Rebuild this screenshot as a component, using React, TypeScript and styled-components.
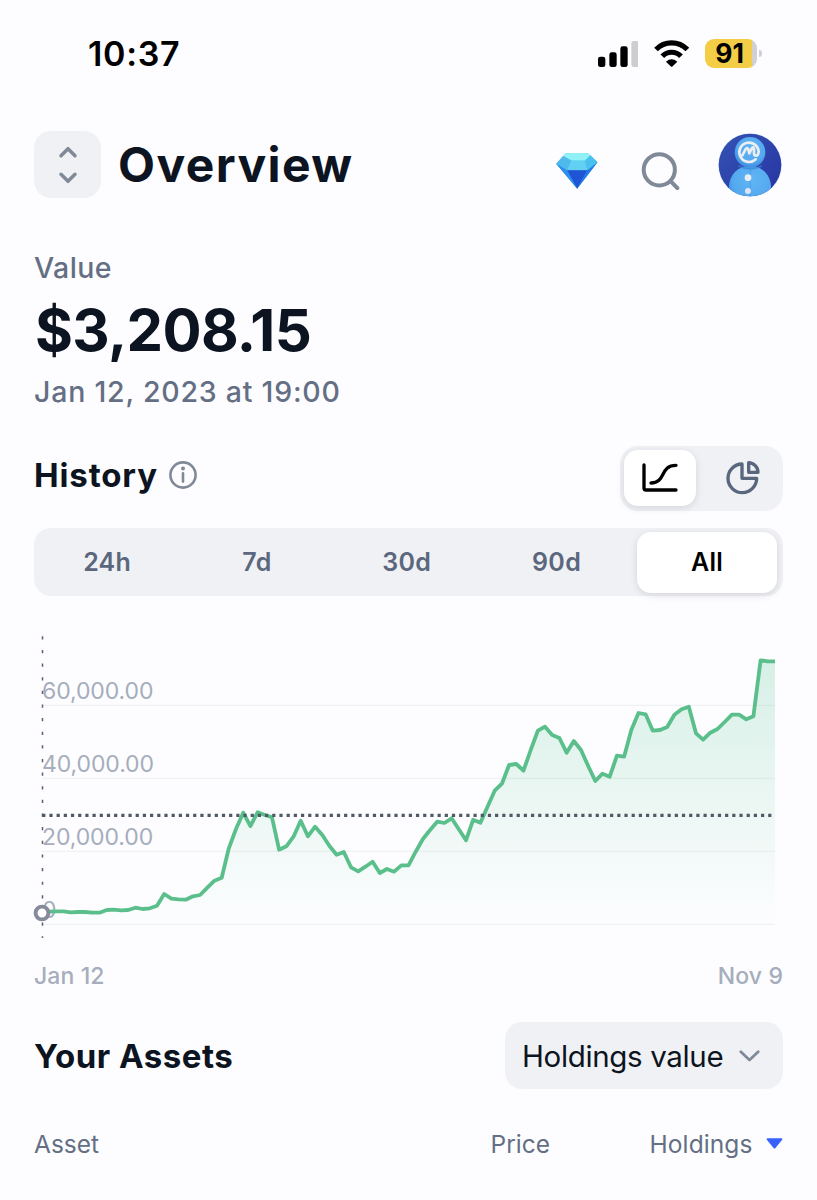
import React from "react";
import styled, { createGlobalStyle } from "styled-components";

const GlobalStyle = createGlobalStyle`
  * { box-sizing: border-box; }
  body { margin: 0; background: #fdfdff; }
`;

const ink = "#0d1421";
const slate = "#646f84";
const muted = "#808998";
const pale = "#a6adbc";
const panel = "#f0f1f5";

const Screen = styled.main`
  width: 817px;
  height: 1200px;
  overflow: hidden;
  background: #fdfdff;
  color: ${ink};
  font-family: Inter, "Liberation Sans", sans-serif;
`;

const Label = styled.span<{ $size: number; $weight?: number; $track?: number; $color?: string }>`
  font-size: ${(p) => p.$size}px;
  font-weight: ${(p) => p.$weight ?? 400};
  letter-spacing: ${(p) => p.$track ?? 0}px;
  color: ${(p) => p.$color ?? ink};
  white-space: nowrap;
`;

const StatusBar = styled.div`
  height: 107px;
  padding: 0 55.5px 0 88px;
  display: flex;
  align-items: center;
  justify-content: space-between;
`;

const StatusIcons = styled.div`
  display: flex;
  align-items: center;
  gap: 15.5px;
`;

const BatteryWrap = styled.div`
  display: flex;
  align-items: center;
  gap: 2px;
`;

const Battery = styled.div`
  width: 52.5px;
  height: 29px;
  padding-right: 2.5px;
  border-radius: 9px;
  background: linear-gradient(90deg, #f3cd46 0 47.5px, #cfcfd4 47.5px);
  display: flex;
  align-items: center;
  justify-content: center;
  line-height: 29px;
`;

const BatteryTip = styled.div`
  width: 2.5px;
  height: 7px;
  border-radius: 0 3px 3px 0;
  background: #cdd0d5;
`;

const Content = styled.div`
  padding: 24px 34px 0;
`;

const Header = styled.header`
  height: 67px;
  display: flex;
  align-items: center;
`;

const SwitchButton = styled.button`
  width: 67px;
  height: 67px;
  margin: 0 17px 0 0;
  padding: 0;
  border: 0;
  border-radius: 17px;
  background: ${panel};
  display: grid;
  place-items: center;
`;

const Title = styled.h1`
  margin: 0 auto 0 0;
  font-size: 48px;
  line-height: 60px;
  font-weight: 700;
  letter-spacing: 1.4px;
`;

const HeaderActions = styled.div`
  display: flex;
  align-items: center;
  margin-right: 1px;
  svg { display: block; }
`;

const GemSlot = styled.div`margin: 13px 42.5px 0 0;`;
const SearchSlot = styled.div`margin: 14px 38.5px 0 0;`;

const Summary = styled.section`
  margin-top: 52px;
  height: 159px;
  display: flex;
  flex-direction: column;
`;

const Caption = styled(Label)`line-height: 36px;`;

const Amount = styled(Label)`
  line-height: 76px;
  margin: 6px 0 6px 1px;
`;

const HistoryRow = styled.div`
  margin-top: 37px;
  height: 65px;
  display: flex;
  justify-content: space-between;
`;

const HistoryTitle = styled.h2`
  margin: 0;
  height: 58px;
  display: flex;
  align-items: center;
  gap: 11.5px;
`;

const ViewToggle = styled.div`
  width: 163px;
  height: 64.5px;
  padding: 3.5px 4px;
  border-radius: 18px;
  background: ${panel};
  display: flex;
`;

const ViewOption = styled.button<{ $active?: boolean }>`
  flex: ${(p) => (p.$active ? "0 0 71.5px" : "1")};
  height: 56.5px;
  padding: ${(p) => (p.$active ? "0" : "0 0 0 12px")};
  border: 0;
  border-radius: 14px;
  background: ${(p) => (p.$active ? "#fff" : "transparent")};
  box-shadow: ${(p) => (p.$active ? "0 2px 7px rgba(60, 66, 80, 0.16)" : "none")};
  display: grid;
  place-items: center;
`;

const Tabs = styled.div`
  margin-top: 17px;
  height: 68px;
  border-radius: 17px;
  background: ${panel};
  display: grid;
  grid-template-columns: repeat(5, 1fr);
`;

const Tab = styled.button<{ $active?: boolean }>`
  margin: 4px 6px 4px 4px;
  padding: ${(p) => (p.$active ? "0" : "0 1.5px 0 0")};
  border: 0;
  border-radius: 14px;
  font: 600 25px/61px Inter, sans-serif;
  letter-spacing: 0.3px;
  color: ${(p) => (p.$active ? "#000" : "#5b677d")};
  background: ${(p) => (p.$active ? "#fff" : "transparent")};
  box-shadow: ${(p) => (p.$active ? "0 2px 7px rgba(60, 66, 80, 0.16)" : "none")};
`;

const ChartBox = styled.div`
  margin-top: 24px;
  height: 330px;
  svg { display: block; overflow: visible; }
`;

const DateRange = styled.div`
  margin-top: 10px;
  height: 32px;
  display: flex;
  justify-content: space-between;
  align-items: center;
`;

const AssetsRow = styled.div`
  margin-top: 30px;
  height: 67px;
  display: flex;
  align-items: center;
  justify-content: space-between;
`;

const SortSelect = styled.button`
  width: 278px;
  height: 67px;
  padding: 0 23px 0 17px;
  border: 0;
  border-radius: 17px;
  background: ${panel};
  font-family: inherit;
  display: flex;
  align-items: center;
  justify-content: space-between;
`;

const TableHead = styled.div`
  margin-top: 37px;
  height: 36px;
  display: grid;
  grid-template-columns: 1fr 120px 233px;
  align-items: center;
`;

const HeadCell = styled.div<{ $end?: boolean }>`
  display: flex;
  align-items: center;
  gap: 13.5px;
  justify-content: ${(p) => (p.$end ? "flex-end" : "flex-start")};
  svg { margin-top: -2px; }
`;

const Signal = () => (
  <svg width="40.7" height="26" viewBox="53 61 122 78">
    <rect x="53" y="108" width="22" height="31" rx="7" />
    <rect x="87" y="95" width="22" height="44" rx="7" />
    <rect x="120" y="77" width="22" height="62" rx="7" />
    <rect x="153" y="61" width="22" height="78" rx="7" fill="#cdcdd0" />
  </svg>
);

const Wifi = () => (
  <svg width="35.3" height="27" viewBox="221 58 106 81">
    <g fill="none" stroke="#000" strokeWidth="15.500">
      <path d="M227 86.500A65 65 0 0 1 321 86.500" />
      <path d="M246 107A38 38 0 0 1 302 107" />
    </g>
    <path d="M257 123Q274 108 291 123L277 137Q274 140 271 137Z" />
  </svg>
);

const Sorter = () => (
  <svg width="20" height="38" viewBox="0 0 20 38" fill="none" stroke={muted} strokeWidth="3.500" strokeLinecap="round" strokeLinejoin="round">
    <path d="M3 9.700L10 2.700L17 9.700M3 28.300L10 35.300L17 28.300" />
  </svg>
);

const Gem = () => (
  <svg width="42" height="36" viewBox="47 100 125 108">
    <path d="M76 101Q110 98 142 101L171 128L110 207L47 132Z" fill="#3fb2ee" />
    <path d="M76 101Q110 98 142 101L150 107L136 124L90 124L68 109Z" fill="#8ff1f5" />
    <path d="M68 109L92 122L80 152L47 132Z" fill="#4fb9ec" />
    <path d="M92 122L134 122L141 152L80 152Z" fill="#62d0f3" />
    <path d="M150 107L171 128L141 152L134 122Z" fill="#48c1ee" />
    <path d="M47 132L80 152L110 207Z" fill="#2e8eee" />
    <path d="M80 152H141L110 207Z" fill="#1d55d4" />
    <path d="M171 128L141 152L110 207Z" fill="#2479e6" />
  </svg>
);

const Search = () => (
  <svg width="39" height="39" viewBox="0 0 39 39" fill="none" stroke={muted} strokeWidth="4" strokeLinecap="round">
    <circle cx="18.300" cy="17.800" r="15.600" />
    <path d="M29.500 29.200L36.300 36" />
  </svg>
);

const Avatar = () => (
  <svg width="64" height="64" viewBox="534 38 192 192">
    <defs>
      <clipPath id="face"><circle cx="630" cy="134" r="94" /></clipPath>
      <linearGradient id="night" x1="0" y1="0" x2="1" y2="1">
        <stop offset="0" stopColor="#3453b6" />
        <stop offset="1" stopColor="#2734a0" />
      </linearGradient>
      <radialGradient id="snow" cx=".55" cy=".35" r=".65">
        <stop offset="0" stopColor="#5fb6f5" />
        <stop offset=".7" stopColor="#55a9ef" />
        <stop offset="1" stopColor="#3f8be0" />
      </radialGradient>
    </defs>
    <circle cx="630" cy="134" r="95.500" fill="#dceafc" />
    <g clipPath="url(#face)">
      <rect x="534" y="38" width="192" height="192" fill="url(#night)" />
      <circle cx="630" cy="199" r="63" fill="url(#snow)" />
      <circle cx="630" cy="96" r="46" fill="url(#snow)" />
      <path d="M595 137Q630 154 665 137" fill="none" stroke="#3783d8" strokeWidth="5" opacity=".7" />
      <path d="M631 145V230" stroke="#438fde" strokeWidth="2" />
      <g fill="none" stroke="#eceef2" strokeWidth="8" strokeLinecap="round" strokeLinejoin="round">
        <path d="M647 117A29 29 0 1 1 656 94Q655 106 648 106Q642 106 642 98V84Q640 78 635 85L628 99L625 87Q621 79 616 88L607 105" />
      </g>
      <circle cx="624" cy="172" r="10" fill="#e8edf5" />
      <circle cx="624" cy="212" r="9" fill="#dce5f1" />
    </g>
  </svg>
);

const Info = () => (
  <svg width="28" height="28" viewBox="0 0 28 28" fill="none" stroke={muted} strokeWidth="2.600">
    <circle cx="14" cy="14" r="12.600" />
    <path d="M14 12.400V20.600" strokeLinecap="round" />
    <circle cx="14" cy="7.500" r="2" fill={muted} stroke="none" />
  </svg>
);

const LineIcon = () => (
  <svg width="36" height="30" viewBox="696 71 108 90" fill="none" stroke="#000" strokeWidth="10" strokeLinecap="round" strokeLinejoin="round">
    <path d="M702 77V146Q702 152 708 152H798M723 131C769 131 748 78 798 78" />
  </svg>
);

const PieIcon = () => (
  <svg width="36" height="36" viewBox="948 60 108 108" fill="none" stroke="#58667e" strokeWidth="10" strokeLinejoin="round">
    <path d="M999 72A43 43 0 1 0 1043 115H999Z" />
    <path d="M1019 68V97H1047A29 29 0 0 0 1019 68Z" />
  </svg>
);

const Chevron = () => (
  <svg width="21" height="12" viewBox="0 0 21 12" fill="none" stroke={muted} strokeWidth="2.700" strokeLinecap="round" strokeLinejoin="round">
    <path d="M1.800 1.700L10.500 10L19.200 1.700" />
  </svg>
);

const Triangle = () => (
  <svg width="17" height="11" viewBox="0 0 17 11" fill="#3861fb" stroke="#3861fb" strokeWidth="2" strokeLinejoin="round">
    <path d="M1.600 1.200H15.400L8.500 9.500Z" />
  </svg>
);

/* Sample positions, three units per pixel, measured down from the chart's top edge. */
const samples = [
  877, 875, 874, 874, 877, 876, 876, 878, 878, 870, 869, 871, 870, 863, 867, 865, 857,
  822, 836, 838, 839, 829, 825, 803, 782, 773, 685, 627, 578, 618, 577, 585, 592,
  689, 679, 650, 602, 649, 620, 645, 678, 704, 696, 742, 754, 740, 725, 759, 747, 755,
  736, 736, 695, 657, 630, 605, 609, 595, 628, 661, 599, 608, 560, 512, 491, 435, 432,
  452, 390, 332, 320, 345, 354, 398, 363, 390, 438, 483, 461, 470, 407, 410, 330,
  279, 283, 332, 330, 321, 284, 268, 260, 340, 359, 338, 327, 306, 284, 284, 298,
  289, 121, 124, 124,
];
const left = 8;
const right = 741;
const step = (right - left) / (samples.length - 1);
const line = samples.map((v, i) => `${(left + i * step).toFixed(1)} ${(v / 3).toFixed(1)}`).join("L");

const axis = [
  { text: "60,000.00", y: 85.4 },
  { text: "40,000.00", y: 158.3 },
  { text: "20,000.00", y: 231.3 },
  { text: "0", y: 304.3 },
];

const HistoryChart = () => (
  <svg width="749" height="330" viewBox="0 0 749 330">
    <defs>
      <linearGradient id="fill" gradientUnits="userSpaceOnUse" x1="0" y1="40" x2="0" y2="308">
        <stop offset="0" stopColor="#4fc08d" stopOpacity=".22" />
        <stop offset="1" stopColor="#4fc08d" stopOpacity="0" />
      </linearGradient>
    </defs>
    {axis.map((a) => (
      <React.Fragment key={a.text}>
        <path d={`M${left} ${a.y}H${right}`} stroke="#f0f1f4" strokeWidth="1.300" />
        <text x={left} y={a.y - 6.6} fontSize="23" fontWeight="430" letterSpacing="-.1" fill={pale}>{a.text}</text>
      </React.Fragment>
    ))}
    <path d="M8.500 16.300V318" stroke="#596273" strokeWidth="1.500" strokeDasharray="3.200 10.430" />
    <path d={`M${line}V308H${left}Z`} fill="url(#fill)" />
    <path d={`M${line}`} fill="none" stroke="#5abf8b" strokeWidth="3.800" strokeLinejoin="round" />
    <path d="M8.200 195.400H739" stroke="#4f5a66" strokeWidth="3.200" strokeDasharray="3.200 3.988" />
    <circle cx="8" cy="293" r="6.400" fill="#fff" stroke="#858b9b" strokeWidth="3.900" />
  </svg>
);

export default function App() {
  return (
    <Screen>
      <GlobalStyle />
      <StatusBar>
        <Label $size={34} $weight={600} $track={0.7} $color="#000">10:37</Label>
        <StatusIcons>
          <Signal />
          <Wifi />
          <BatteryWrap>
            <Battery><Label $size={26.5} $weight={700} $color="#000">91</Label></Battery>
            <BatteryTip />
          </BatteryWrap>
        </StatusIcons>
      </StatusBar>
      <Content>
        <Header>
          <SwitchButton aria-label="Switch portfolio"><Sorter /></SwitchButton>
          <Title>Overview</Title>
          <HeaderActions>
            <GemSlot><Gem /></GemSlot>
            <SearchSlot><Search /></SearchSlot>
            <Avatar />
          </HeaderActions>
        </Header>
        <Summary>
          <Caption $size={28.5} $weight={450} $track={0.4} $color={slate}>Value</Caption>
          <Amount $size={58} $weight={700} $track={-0.65}>$3,208.15</Amount>
          <Caption $size={28.5} $weight={450} $track={0.78} $color={slate}>Jan 12, 2023 at 19:00</Caption>
        </Summary>
        <HistoryRow>
          <HistoryTitle>
            <Label $size={33} $weight={700} $track={0.85}>History</Label>
            <Info />
          </HistoryTitle>
          <ViewToggle>
            <ViewOption $active aria-label="Line chart"><LineIcon /></ViewOption>
            <ViewOption aria-label="Allocation"><PieIcon /></ViewOption>
          </ViewToggle>
        </HistoryRow>
        <Tabs>
          {["24h", "7d", "30d", "90d", "All"].map((t) => (
            <Tab key={t} $active={t === "All"}>{t}</Tab>
          ))}
        </Tabs>
        <ChartBox><HistoryChart /></ChartBox>
        <DateRange>
          <Label $size={23} $weight={450} $track={0.1} $color={pale}>Jan 12</Label>
          <Label $size={23} $weight={450} $track={0.1} $color={pale}>Nov 9</Label>
        </DateRange>
        <AssetsRow>
          <Label $size={33} $weight={700} $track={0.5}>Your Assets</Label>
          <SortSelect>
            <Label $size={29.5} $track={-0.35}>Holdings value</Label>
            <Chevron />
          </SortSelect>
        </AssetsRow>
        <TableHead>
          <HeadCell><Label $size={24.5} $weight={430} $color={slate}>Asset</Label></HeadCell>
          <HeadCell $end><Label $size={24.5} $weight={430} $color={slate}>Price</Label></HeadCell>
          <HeadCell $end>
            <Label $size={24.5} $weight={430} $track={0.1} $color={slate}>Holdings</Label>
            <Triangle />
          </HeadCell>
        </TableHead>
      </Content>
    </Screen>
  );
}
